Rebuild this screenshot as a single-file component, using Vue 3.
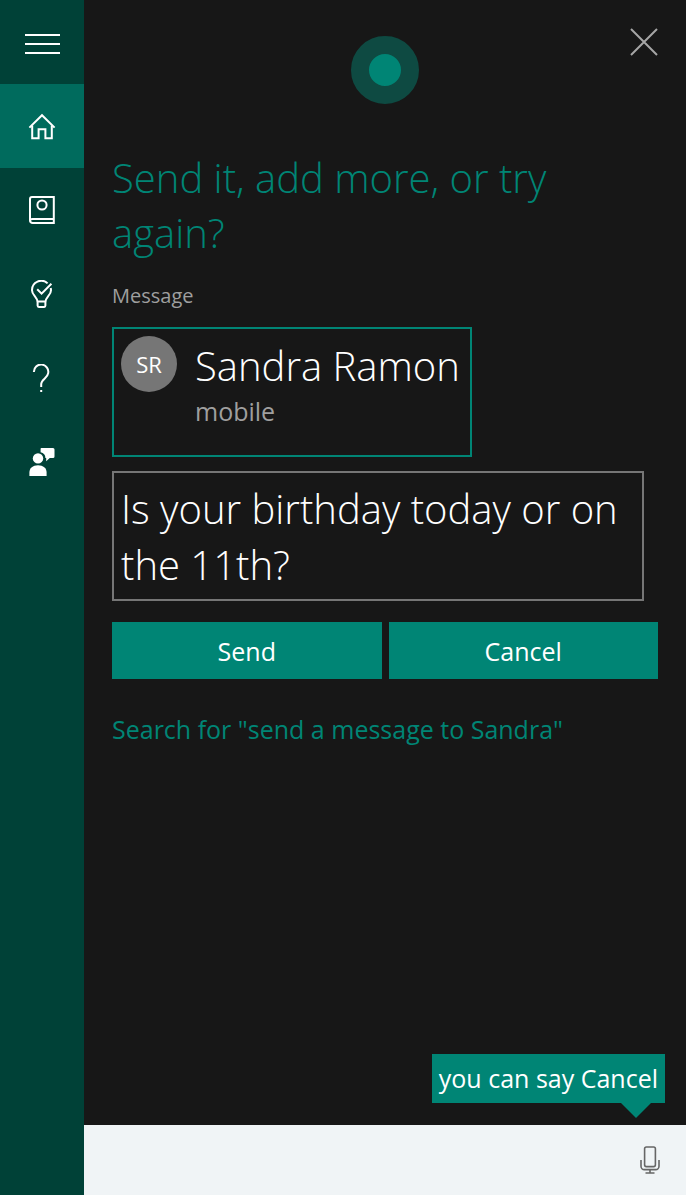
<template>
  <div class="cortana">
    <nav class="sidebar" aria-label="Main">
      <button class="nav-item" type="button" aria-label="Menu">
        <svg width="36" height="36" viewBox="0 0 36 36">
          <path d="M1 11h35M1 20h35M1 29h35" />
        </svg>
      </button>

      <button
        v-for="item in items"
        :key="item.id"
        class="nav-item"
        :class="{ 'is-active': item.id === active }"
        type="button"
        :aria-label="item.label"
        @click="active = item.id"
      >
        <svg v-if="item.id === 'home'" width="28" height="28" viewBox="0 0 28 28">
          <path d="M1.4 15.6 14 3.2l12.6 12.4" />
          <path d="M4.2 13.4v12.8h6.4v-9h6.8v9h6.4V13.4" />
        </svg>

        <svg v-else-if="item.id === 'notebook'" width="28" height="28" viewBox="0 0 28 28">
          <path d="M4 1h21.8v26H4.6A2.6 2.6 0 0 1 2 24.4V3a2 2 0 0 1 2-2Z" />
          <path d="M2.400 24c.5-.8 1.200-1 2.200-1h21.200" />
          <circle cx="14" cy="9" r="4.600" />
        </svg>

        <svg v-else-if="item.id === 'tips'" width="28" height="28" viewBox="0 0 28 28">
          <path d="M19.600 3.400A9.200 9.200 0 0 0 4 10.200c0 5.400 5.600 6.600 5.600 12.200v3.200c0 .8.4 1.400 1.200 1.400h5.400c.8 0 1.200-.6 1.200-1.400v-3.200c0-5.600 5.600-6.800 5.600-12.200 0-.8-.1-1.600-.3-2.300" />
          <path d="M9.600 21.600h7.800M9.200 9.200l4.400 4.400L23.400 3.800" />
        </svg>

        <svg v-else-if="item.id === 'help'" width="28" height="28" viewBox="0 0 28 28">
          <path d="M5.900 8a7.200 7.200 0 1 1 14.200 1.400c-.5 4.800-6.900 5.900-6.900 10.600v3" />
          <path d="M13.200 26v2" />
        </svg>

        <svg v-else class="solid" width="28" height="28" viewBox="0 0 28 28">
          <path d="M13.300 0h11.700a1.500 1.500 0 0 1 1.500 1.500v7a1.500 1.500 0 0 1-1.500 1.500h-3.200l-3.600 3.200V10h-.8a6 6 0 0 0-4.800-5.800V1a1 1 0 0 1 .7-1Z" />
          <circle cx="10" cy="10.400" r="5.200" />
          <path d="M1.400 28v-3.400c0-4.600 3.400-7.400 8.600-7.400s8.600 2.800 8.600 7.400V28Z" />
        </svg>
      </button>
    </nav>

    <main class="panel">
      <header class="panel-header">
        <span class="orb"></span>
        <button class="close" type="button" aria-label="Close">
          <svg width="28" height="28" viewBox="0 0 28 28">
            <path d="m1 1 26 26M27 1 1 27" />
          </svg>
        </button>
      </header>

      <form class="content" @submit.prevent>
        <h1>Send it, add more, or try again?</h1>
        <label class="caption" for="message">Message</label>

        <button class="contact" type="button">
          <span class="avatar">SR</span>
          <span class="contact-text">
            <span class="contact-name">Sandra Ramon</span>
            <span class="contact-kind">mobile</span>
          </span>
        </button>

        <textarea id="message" v-model="message" class="message" rows="2"></textarea>

        <div class="actions">
          <button type="submit">Send</button>
          <button type="button">Cancel</button>
        </div>

        <a class="search-link" href="#">Search for "send a message to Sandra"</a>
      </form>

      <footer class="ask-bar">
        <input v-model="query" class="ask-input" type="text" aria-label="Ask Cortana" />
        <button class="mic" type="button" aria-label="Speak">
          <svg width="20" height="28" viewBox="0 0 20 28">
            <rect x="4.600" y="1" width="10.800" height="19.600" rx="1.800" />
            <path d="M1 14v6.200A3.400 3.400 0 0 0 4.400 23.600h11.200A3.400 3.400 0 0 0 19 20.200V14M10 23.600V27M5.500 27h9" />
          </svg>
        </button>
        <div class="hint" role="tooltip">you can say Cancel</div>
      </footer>
    </main>
  </div>
</template>

<script setup>
import { ref } from 'vue'

const items = [
  { id: 'home', label: 'Home' },
  { id: 'notebook', label: 'Notebook' },
  { id: 'tips', label: 'Tips' },
  { id: 'help', label: 'Help' },
  { id: 'feedback', label: 'Feedback' }
]

const active = ref('home')
const message = ref('Is your birthday today or on the 11th?')
const query = ref('')
</script>

<style>
body {
  margin: 0;
  background: #171717;
}
</style>

<style scoped>
.cortana {
  --accent: #008575;
  --accent-nav: #006b5d;
  --nav: #004137;
  --muted: #9f9f9f;

  display: flex;
  min-height: 100vh;

  color: #ffffff;
  background: #171717;
  font-family: 'Segoe UI', 'Open Sans', 'Noto Sans', sans-serif;
}

.cortana * {
  box-sizing: border-box;
}

button,
input,
textarea {
  margin: 0;
  padding: 0;

  color: inherit;
  background: none;
  border: 0;
  border-radius: 0;
  font: inherit;
}

button {
  cursor: pointer;
}

svg {
  display: block;

  fill: none;
  stroke: currentColor;
  stroke-width: 2;
}

/* Sidebar */

.sidebar {
  flex: none;
  width: 84px;

  background: var(--nav);
}

.nav-item {
  display: flex;
  align-items: center;
  justify-content: center;

  width: 100%;
  height: 84px;
}

.nav-item.is-active {
  background: var(--accent-nav);
}

.solid {
  fill: currentColor;
  stroke: none;
}

/* Panel */

.panel {
  flex: 1;
  min-width: 0;

  display: flex;
  flex-direction: column;
}

.panel-header {
  display: grid;
  grid-template-columns: 1fr auto 1fr;
  align-items: start;

  padding: 28px 28px 0;
}

.orb {
  grid-column: 2;

  width: 68px;
  height: 68px;
  margin-top: 8px;

  background: var(--accent);
  border: 18px solid #0e4a42;
  border-radius: 50%;
}

.close {
  justify-self: end;
  color: #a6a6a6;
}

.content {
  flex: 1;

  display: flex;
  flex-direction: column;
  align-items: flex-start;

  padding: 46px 28px;
}

h1 {
  margin: 0;

  color: var(--accent);
  font-size: 40px;
  font-weight: 350;
  line-height: 55px;
}

.caption {
  margin: 22px 0 17px;

  color: var(--muted);
  font-size: 20px;
  line-height: 28px;
}

.contact {
  display: flex;
  align-items: flex-start;
  gap: 18px;

  min-width: 360px;
  height: 130px;
  padding: 7px;

  text-align: left;
  border: 2px solid var(--accent);
}

.avatar {
  flex: none;

  width: 56px;
  height: 56px;

  background: #767676;
  border-radius: 50%;

  font-size: 22px;
  line-height: 56px;
  text-align: center;
}

.contact-text {
  display: flex;
  flex-direction: column;
}

.contact-name {
  font-size: 40px;
  font-weight: 350;
  line-height: 60px;
}

.contact-kind {
  color: var(--muted);
  font-size: 25px;
  line-height: 30px;
}

.message {
  width: calc(100% - 14px);
  height: 130px;
  margin-top: 14px;
  padding: 8px 7px;

  border: 2px solid #767676;
  outline: none;
  overflow: hidden;
  resize: none;

  font-size: 40px;
  font-weight: 350;
  line-height: 56px;
}

.actions {
  display: grid;
  grid-template-columns: 1fr 1fr;
  gap: 7px;

  width: 100%;
  margin-top: 21px;
}

.actions button {
  height: 57px;

  background: var(--accent);
  font-size: 25px;
}

.search-link {
  margin-top: 32px;

  color: var(--accent);
  font-size: 25px;
  line-height: 36px;
  text-decoration: none;
}

/* Ask bar */

.ask-bar {
  position: relative;

  display: flex;
  height: 70px;

  color: #171717;
  background: #f0f4f6;
}

.ask-input {
  flex: 1;
  min-width: 0;
  padding: 0 28px;

  outline: none;
  font-size: 25px;
}

.mic {
  display: flex;
  align-items: center;
  justify-content: center;

  width: 72px;

  color: #666666;
}

.mic svg {
  stroke-width: 1.6;
}

.hint {
  position: absolute;
  right: 21px;
  bottom: 92px;

  padding: 0 7px;

  color: #ffffff;
  background: var(--accent);
  font-size: 25px;
  line-height: 49px;
  white-space: nowrap;
}

.hint::after {
  content: '';

  position: absolute;
  top: 100%;
  right: 14px;

  border: 15px solid transparent;
  border-top-color: var(--accent);
  border-bottom-width: 0;
}
</style>
